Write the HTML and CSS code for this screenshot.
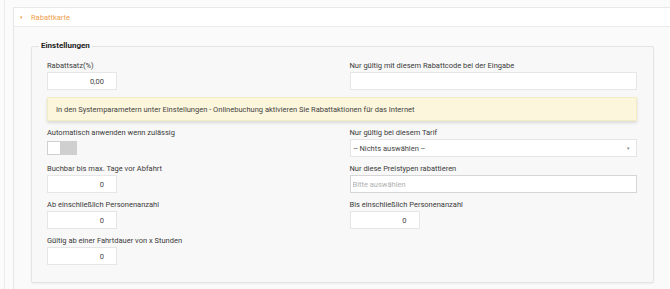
FILE: index.html
```html
<!DOCTYPE html>
<html lang="de">
<head>
  <meta charset="UTF-8" />
  <title>Rabattkarte</title>
  <link rel="stylesheet" href="styles.css">
</head>
<body>
  <div class="outer">
    <div class="panel">
      <div class="panel-head">
        <span class="caret">&#9662;</span>
        <span class="panel-title">Rabattkarte</span>
      </div>

      <div class="panel-body">
        <fieldset class="settings">
          <legend>Einstellungen</legend>

          <div class="grid">
            <div class="field">
              <label>Rabattsatz(%)</label>
              <input class="num" type="text" value="0,00" />
            </div>
            <div class="field">
              <label>Nur gültig mit diesem Rabattcode bei der Eingabe</label>
              <input class="wide" type="text" />
            </div>

            <div class="alert">In den Systemparametern unter Einstellungen - Onlinebuchung aktivieren Sie Rabattaktionen für das Internet</div>

            <div class="field">
              <label>Automatisch anwenden wenn zulässig</label>
              <div class="toggle-row"><span class="toggle"><span class="knob"></span></span></div>
            </div>
            <div class="field">
              <label>Nur gültig bei diesem Tarif</label>
              <div class="select">
                <span>-- Nichts auswählen --</span>
                <span class="arrow">&#9662;</span>
              </div>
            </div>

            <div class="field">
              <label>Buchbar bis max. Tage vor Abfahrt</label>
              <input class="num" type="text" value="0" />
            </div>
            <div class="field">
              <label>Nur diese Preistypen rabattieren</label>
              <input class="wide multi" type="text" placeholder="Bitte auswählen" />
            </div>

            <div class="field">
              <label>Ab einschließlich Personenanzahl</label>
              <input class="num" type="text" value="0" />
            </div>
            <div class="field">
              <label>Bis einschließlich Personenanzahl</label>
              <input class="num" type="text" value="0" />
            </div>

            <div class="field">
              <label>Gültig ab einer Fahrtdauer von x Stunden</label>
              <input class="num" type="text" value="0" />
            </div>
          </div>
        </fieldset>
      </div>
    </div>
  </div>
</body>
</html>
```

FILE: styles.css
```css
* {
  box-sizing: border-box;
}

body {
  margin: 0;
  font-family: Roboto, 'Liberation Sans', Arial, sans-serif;
  font-size: 7.5px;
  color: #333;
  background: #fbfbfb;
}

.outer {
  margin-left: 4px;
  padding-left: 8px;
  border-left: 1px solid #ececec;
  padding-top: 7px;
  height: 289px;
}

.panel {
  border-left: 1px solid #e6e6e6;
  border-top: 1px solid #e8e8e8;
  background: #fafafa;
  height: 100%;
}

.panel-head {
  height: 19px;
  display: flex;
  align-items: center;
  background: #fff;
  border-bottom: 1px solid #ececec;
  padding-left: 6px;
  color: #f0a04b;
}

.caret {
  font-size: 5px;
  width: 11px;
}

.panel-title {
  font-size: 7.5px;
}

.panel-body {
  padding: 13px 16px 0 17px;
}

.settings {
  margin: 0;
  border: 1px solid #e4e4e4;
  border-radius: 2px;
  background: #f8f8f8;
  padding: 9px 16px 17px 15px;
  box-shadow: 0 1px 2px rgba(0, 0, 0, 0.05);
}

.settings legend {
  font-weight: bold;
  font-size: 8px;
  line-height: 12px;
  color: #222;
  margin-left: -8px;
  padding: 0 2px;
}

.grid {
  display: grid;
  grid-template-columns: 1fr 1fr;
  column-gap: 15px;
  row-gap: 7px;
}

.field {
  display: flex;
  flex-direction: column;
  align-items: flex-start;
}

.field label {
  line-height: 10px;
  margin-bottom: 1px;
  color: #3a3a3a;
}

input {
  height: 18px;
  border: 1px solid #e6e6e6;
  background: #fff;
  font-family: inherit;
  font-size: 7.5px;
  color: #444;
  outline: none;
  padding: 0 6px;
}

input.num {
  width: 70px;
  text-align: right;
  padding-right: 12px;
}

input.wide {
  width: 100%;
}

input.multi {
  border-color: #d6d6d6;
  padding-left: 2px;
}

input.multi::placeholder {
  color: #b0b0b0;
}

.alert {
  grid-column: 1 / 3;
  height: 24px;
  display: flex;
  align-items: center;
  padding-left: 8px;
  background: #fcf6dc;
  border: 1px solid #f3ebc4;
  color: #444;
  box-shadow: 0 2px 3px rgba(0, 0, 0, 0.12);
}

.toggle-row {
  height: 18px;
  display: flex;
  align-items: center;
}

.toggle {
  width: 30px;
  height: 14px;
  background: #cfcfcf;
  padding: 1px;
  display: flex;
}

.knob {
  width: 12px;
  height: 12px;
  background: #fff;
}

.select {
  width: 100%;
  height: 18px;
  border: 1px solid #e6e6e6;
  background: #fff;
  display: flex;
  align-items: center;
  justify-content: space-between;
  padding: 0 6px 0 3px;
  color: #444;
}

.select .arrow {
  font-size: 5px;
  color: #888;
}
```
